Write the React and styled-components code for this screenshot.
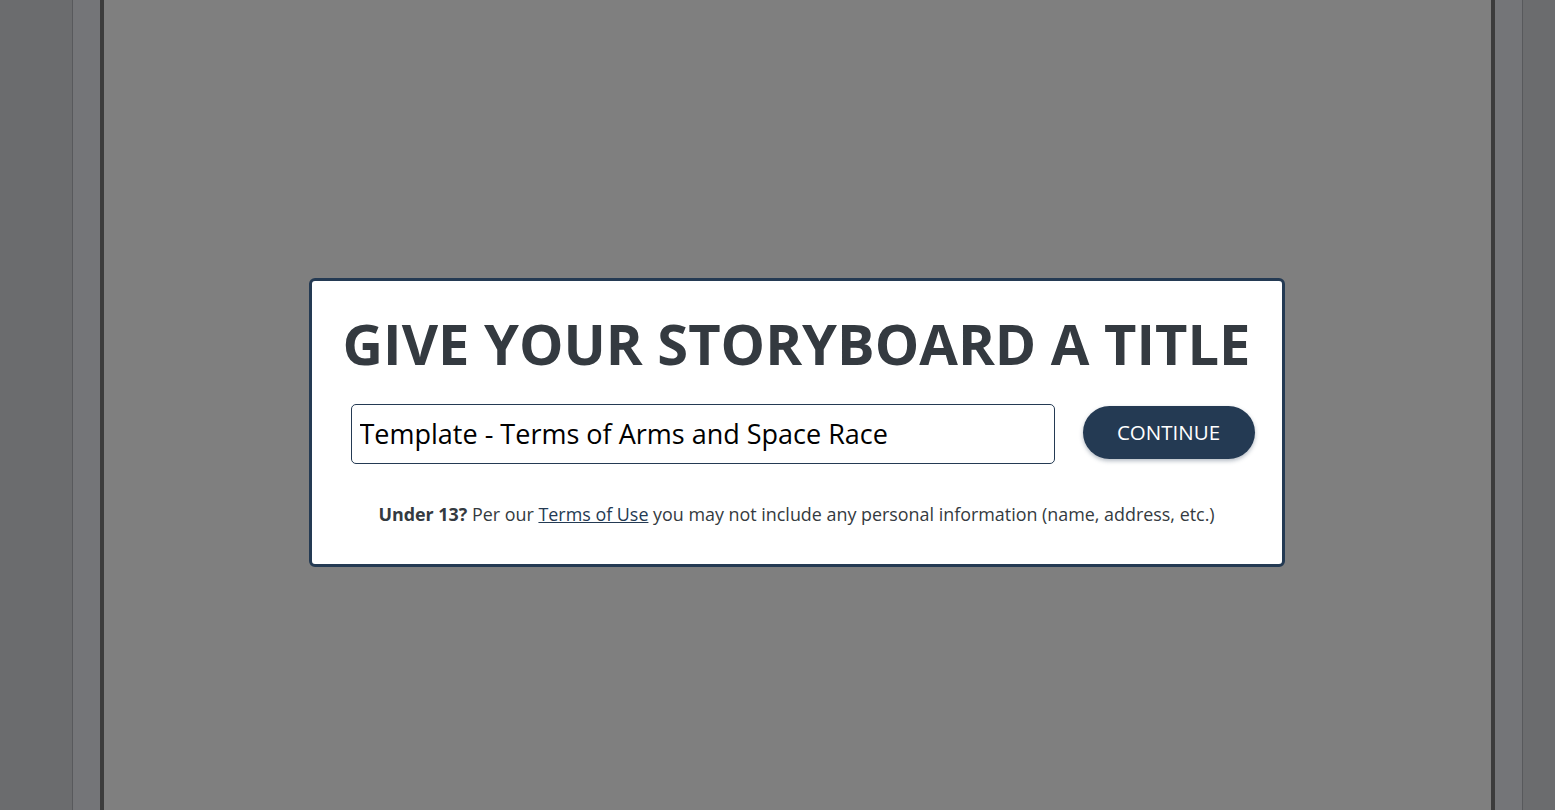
import React from "react";
import styled, { createGlobalStyle } from "styled-components";

const Global = createGlobalStyle`
  html, body { margin: 0; padding: 0; height: 100%; }
  body { font-family: "Open Sans", "Liberation Sans", sans-serif; overflow: hidden; }
`;

const Page = styled.div`
  display: flex;
  height: 810px;
  width: 1555px;
  background: #d6d8dc;
`;

const Gutter = styled.div`
  width: ${(p) => p.$w}px;
  flex: none;
  background: #d6d8dc;
`;

const Rail = styled.div`
  width: 27px;
  flex: none;
  background: #e8eaf0;
  ${(p) => (p.$side === "left" ? "border-left" : "border-right")}: 1px solid #b0b2b8;
`;

const Canvas = styled.div`
  flex: 1;
  background: #ffffff;
  border-left: 4px solid #787878;
  border-right: 4px solid #787878;
`;

const Backdrop = styled.div`
  position: fixed;
  inset: 0;
  background: rgba(0, 0, 0, 0.5);
  display: flex;
  justify-content: center;
  align-items: flex-start;
  padding: 278px 65px 0 103px;
`;

const Modal = styled.div`
  width: 970px;
  flex: none;
  background: #ffffff;
  border: 3px solid #243a53;
  border-radius: 6px;
  padding: 29px 0 38px;
  display: flex;
  flex-direction: column;
  align-items: center;
`;

const Title = styled.h1`
  margin: 0;
  font-family: "Open Sans", sans-serif;
  font-weight: 700;
  font-size: 56px;
  line-height: 1.2;
  color: #343a40;
  white-space: nowrap;
`;

const Row = styled.div`
  align-self: stretch;
  display: flex;
  align-items: center;
  gap: 28px;
  margin-top: 27px;
  padding: 0 27px 0 39px;
`;

const TitleInput = styled.input`
  flex: 1;
  min-width: 0;
  height: 60px;
  box-sizing: border-box;
  border: 1px solid #243a53;
  border-radius: 5px;
  padding: 0 8px 2px;
  font-family: "Open Sans", sans-serif;
  font-size: 27px;
  color: #000;
  background: #fff;
  outline: none;
`;

const Continue = styled.button`
  flex: none;
  width: 172px;
  height: 53px;
  margin-top: -3px;
  padding: 0 0 2px;
  border: none;
  border-radius: 27px;
  background: #243a53;
  color: #ffffff;
  font-family: "Open Sans", sans-serif;
  font-size: 20.5px;
  box-shadow: 0 2px 4px rgba(36, 58, 83, 0.35);
  cursor: pointer;
`;

const Note = styled.p`
  margin: 38px 0 0;
  font-family: "Open Sans", sans-serif;
  font-size: 17.9px;
  line-height: 24px;
  color: #343a40;
`;

const Link = styled.a`
  color: #243a53;
  text-decoration: underline;
`;

export default function App() {
  return (
    <>
      <Global />
      <Page>
        <Gutter $w={72} />
        <Rail $side="left" />
        <Canvas />
        <Rail $side="right" />
        <Gutter $w={32} />
      </Page>
      <Backdrop>
        <Modal>
          <Title>GIVE YOUR STORYBOARD A TITLE</Title>
          <Row>
            <TitleInput defaultValue="Template - Terms of Arms and Space Race" />
            <Continue>CONTINUE</Continue>
          </Row>
          <Note>
            <b>Under 13?</b> Per our <Link href="#">Terms of Use</Link> you may not
            include any personal information (name, address, etc.)
          </Note>
        </Modal>
      </Backdrop>
    </>
  );
}
